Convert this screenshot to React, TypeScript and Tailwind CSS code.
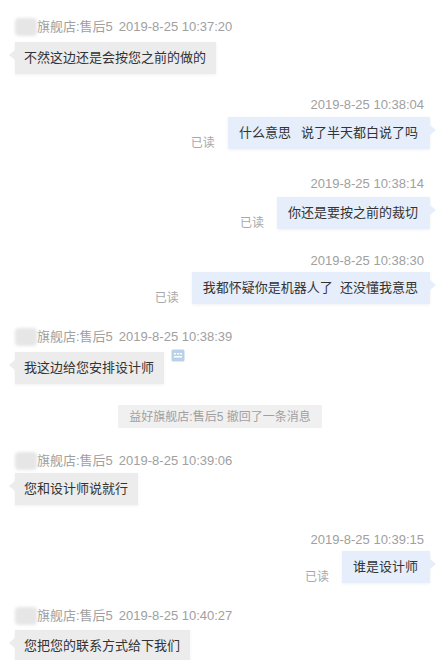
const font = "font-['Liberation_Sans','Noto_Sans_CJK_SC',sans-serif]";

function LeftMsg({ time, text, mt, gap, icon }: { time: string; text: string; mt: string; gap: string; icon?: boolean }) {
  return (
    <div className={`flex flex-col items-start pl-[15px] ${mt}`}>
      <div className="flex items-center h-[18px] text-[13px] leading-[18px] text-[#a0a0a0]">
        <span className="w-[22px] h-[18px] bg-[#e6e6e6] blur-[1.5px] rounded-sm" />
        <span>旗舰店:售后5</span>
        <span className="ml-[6px]">{time}</span>
      </div>
      <div className={`flex items-start ${gap}`}>
        <div className="relative bg-[#ececec] h-[32px] px-[9px] pr-[10px] flex items-center text-[13px] text-[#333] shadow-[0_1px_3px_rgba(0,0,0,0.06)]">
          <span className="absolute left-[-6px] top-[8px] w-0 h-0 border-y-[5px] border-y-transparent border-r-[6px] border-r-[#ececec]" />
          {text}
        </div>
        {icon && (
          <svg width="14" height="13" viewBox="0 0 14 13" className="ml-[7px] -mt-[3px]">
            <rect x="0.5" y="0.5" width="13" height="12" rx="1.5" fill="#b9d2ea" />
            <rect x="3" y="4" width="2" height="1.5" fill="#fff" />
            <rect x="6" y="4" width="2" height="1.5" fill="#fff" />
            <rect x="9" y="4" width="2" height="1.5" fill="#fff" />
            <rect x="3" y="7" width="8" height="1.5" fill="#fff" />
          </svg>
        )}
      </div>
    </div>
  );
}

function RightMsg({ time, text, mt, gap }: { time: string; text: string; mt: string; gap: string }) {
  return (
    <div className={`flex flex-col items-end ${mt}`}>
      <div className="h-[18px] pr-[16px] text-[13px] leading-[18px] text-[#a0a0a0]">{time}</div>
      <div className={`flex items-end pr-[10px] ${gap}`}>
        <span className="mr-[13px] mb-[-3px] text-[12px] text-[#a8a8a8]">已读</span>
        <div className="relative bg-[#e5eefa] h-[32px] pl-[11px] pr-[12px] flex items-center text-[13px] text-[#333] whitespace-pre shadow-[0_1px_3px_rgba(0,0,0,0.06)]">
          {text}
          <span className="absolute right-[-6px] top-[8px] w-0 h-0 border-y-[5px] border-y-transparent border-l-[6px] border-l-[#e5eefa]" />
        </div>
      </div>
    </div>
  );
}

export default function App() {
  return (
    <div className={`w-[440px] h-[660px] overflow-hidden bg-white flex flex-col ${font}`}>
      <LeftMsg time="2019-8-25 10:37:20" text="不然这边还是会按您之前的做的" mt="mt-[18px]" gap="mt-[6px]" />
      <RightMsg time="2019-8-25 10:38:04" text={"什么意思\u2002 说了半天都白说了吗"} mt="mt-[22px]" gap="mt-[3px]" />
      <RightMsg time="2019-8-25 10:38:14" text="你还是要按之前的裁切" mt="mt-[26px]" gap="mt-[4px]" />
      <RightMsg time="2019-8-25 10:38:30" text="我都怀疑你是机器人了  还没懂我意思" mt="mt-[23px]" gap="mt-[2px]" />
      <LeftMsg time="2019-8-25 10:38:39" text="我这边给您安排设计师" mt="mt-[24px]" gap="mt-[6px]" icon />
      <div className="mt-[21px] flex justify-center">
        <div className="h-[23px] px-[11px] flex items-center bg-[#f0f0f0] text-[12px] text-[#a0a0a0]">
          益好旗舰店:售后5 撤回了一条消息
        </div>
      </div>
      <LeftMsg time="2019-8-25 10:39:06" text="您和设计师说就行" mt="mt-[24px]" gap="mt-[3px]" />
      <RightMsg time="2019-8-25 10:39:15" text="谁是设计师" mt="mt-[26px]" gap="mt-[2px]" />
      <LeftMsg time="2019-8-25 10:40:27" text="您把您的联系方式给下我们" mt="mt-[24px]" gap="mt-[5px]" />
    </div>
  );
}
